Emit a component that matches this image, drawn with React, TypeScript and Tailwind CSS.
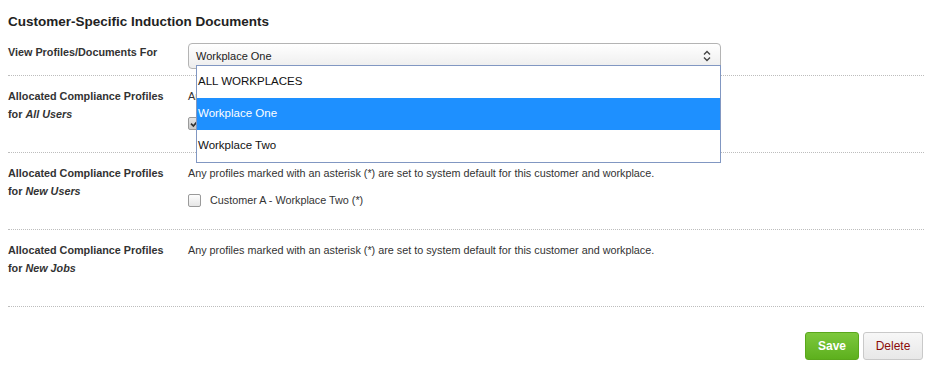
import React from "react";

const options = ["ALL WORKPLACES", "Workplace One", "Workplace Two"];
const notice = "Any profiles marked with an asterisk (*) are set to system default for this customer and workplace.";

function Checkbox({ checked }: { checked?: boolean }) {
  return (
    <span
      className={`flex h-[13px] w-[13px] shrink-0 items-center justify-center rounded-[2px] border border-[#9a9a9a] ${
        checked ? "bg-gradient-to-b from-[#e4e4e4] to-[#c8c8c8]" : "bg-gradient-to-b from-[#fdfdfd] to-[#e6e6e6]"
      }`}
    >
      {checked ? (
        <svg width="9" height="9" viewBox="0 0 9 9">
          <path d="M1 4.6 L3.4 7 L8 1.6" fill="none" stroke="#333" strokeWidth="1.7" />
        </svg>
      ) : null}
    </span>
  );
}

function UpDown() {
  return (
    <svg width="8" height="12" viewBox="0 0 8 12" className="shrink-0">
      <path d="M1 4.5 L4 1.5 L7 4.5" fill="none" stroke="#444" strokeWidth="1.4" />
      <path d="M1 7.5 L4 10.5 L7 7.5" fill="none" stroke="#444" strokeWidth="1.4" />
    </svg>
  );
}

function ProfileRow({ who, children }: { who: string; children?: React.ReactNode }) {
  return (
    <div className="flex h-[77px] border-b border-dotted border-[#bdbdbd] pt-[11px]">
      <div className="w-[180px] shrink-0 text-[10.8px] font-bold leading-[18px] text-[#333]">
        Allocated Compliance Profiles
        <br />
        for <i>{who}</i>
      </div>
      <div className="text-[10.8px] leading-[18px] text-[#333]">
        <p>{notice}</p>
        {children}
      </div>
    </div>
  );
}

export default function App() {
  return (
    <div className="relative h-[367px] w-[932px] bg-white px-2 font-['Liberation_Sans',Arial,sans-serif] text-[#333]">
      <h2 className="pt-[13px] text-[13.5px] font-bold leading-[18px] text-[#222]">Customer-Specific Induction Documents</h2>

      <div className="mt-3 flex border-b border-dotted border-[#bdbdbd] pb-[6px]">
        <div className="w-[180px] shrink-0 text-[10.8px] font-bold leading-[18px]">View Profiles/Documents For</div>
        <div className="relative w-[533px]">
          <div className="flex h-[26px] items-center justify-between rounded-[4px] border border-[#b4b4b4] bg-gradient-to-b from-[#ffffff] to-[#ededed] pl-[7px] pr-[9px] text-[11px] text-[#222]">
            <span>Workplace One</span>
            <UpDown />
          </div>
          <ul className="absolute left-[8px] top-[22px] z-10 w-[525px] border border-[#8197c2] bg-white text-[11.5px] text-[#111]">
            {options.map((option) => (
              <li
                key={option}
                className={`flex h-[32px] items-center pl-[1px] ${option === "Workplace One" ? "bg-[#1e90ff] text-white" : ""}`}
              >
                {option}
              </li>
            ))}
          </ul>
        </div>
      </div>

      <ProfileRow who="All Users">
        <label className="mt-[9px] flex h-[18px] items-center">
          <Checkbox checked />
          <span className="ml-[9px]">Customer A - Workplace One (*)</span>
        </label>
      </ProfileRow>

      <ProfileRow who="New Users">
        <label className="mt-[9px] flex h-[18px] items-center">
          <Checkbox />
          <span className="ml-[9px]">Customer A - Workplace Two (*)</span>
        </label>
      </ProfileRow>

      <ProfileRow who="New Jobs" />

      <div className="mt-[25px] flex justify-end gap-1 pr-px">
        <button className="h-[28px] w-[54px] rounded-[3px] border border-[#5aa71c] bg-gradient-to-b from-[#7dc83c] to-[#5db01d] text-[12px] font-bold text-white">
          Save
        </button>
        <button className="h-[28px] w-[60px] rounded-[3px] border border-[#c9c9c9] bg-gradient-to-b from-[#f7f7f7] to-[#e8e8e8] text-[12px] text-[#8b0a0a]">
          Delete
        </button>
      </div>
    </div>
  );
}
